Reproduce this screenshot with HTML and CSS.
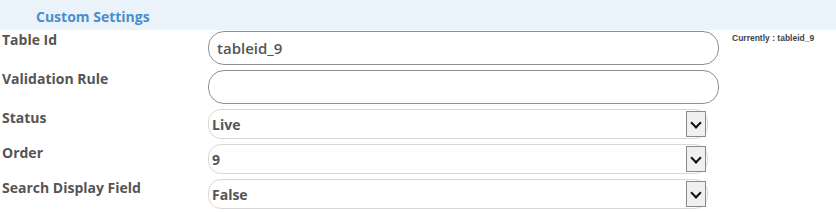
FILE: index.html
```html
<!DOCTYPE html>
<html lang="en">
  <head>
    <meta charset="UTF-8" />
    <title>Custom Settings</title>
    <link rel="stylesheet" href="styles.css">
  </head>
  <body>
    <div class="settings">
      <h3 class="head">Custom Settings</h3>

      <div class="row">
        <label class="lbl">Table Id</label>
        <div class="field">
          <input class="txt" type="text" value="tableid_9" />
        </div>
        <span class="note">Currently : tableid_9</span>
      </div>

      <div class="row">
        <label class="lbl">Validation Rule</label>
        <div class="field">
          <input class="txt" type="text" value="" />
        </div>
      </div>

      <div class="row">
        <label class="lbl">Status</label>
        <div class="field">
          <div class="sel"><span>Live</span><span class="arrow"></span></div>
        </div>
      </div>

      <div class="row">
        <label class="lbl">Order</label>
        <div class="field">
          <div class="sel"><span>9</span><span class="arrow"></span></div>
        </div>
      </div>

      <div class="row">
        <label class="lbl">Search Display Field</label>
        <div class="field">
          <div class="sel"><span>False</span><span class="arrow"></span></div>
        </div>
      </div>
    </div>
  </body>
</html>
```

FILE: styles.css
```css
* {
  margin: 0;
  padding: 0;
  box-sizing: border-box;
  font-family: "Open Sans", Arial, sans-serif;
}

body {
  background: #fff;
}

.head {
  height: 30px;
  background: #eaf2fa;
  color: #4b8dcb;
  font-size: 14px;
  font-weight: 700;
  line-height: 33px;
  padding-left: 36px;
}

.row {
  display: flex;
  align-items: flex-start;
  margin-top: 5px;
}

.row:first-of-type {
  margin-top: 1px;
}

.lbl {
  width: 208px;
  color: #555;
  font-size: 14px;
  font-weight: 700;
  padding-left: 2px;
  line-height: 17px;
}

.field {
  width: 511px;
}

.txt {
  width: 100%;
  height: 34px;
  border: 1px solid #8f8f8f;
  border-radius: 16px;
  padding: 0 8px;
  font-size: 15px;
  font-weight: 600;
  color: #555;
  outline: none;
}

.sel {
  width: 500px;
  height: 30px;
  border: 1px solid #d9d9d9;
  border-radius: 13px;
  display: flex;
  align-items: center;
  justify-content: space-between;
  padding: 0 1px 0 3px;
  font-size: 14px;
  font-weight: 700;
  color: #555;
}

.arrow {
  width: 20px;
  height: 26px;
  background: #f0f0f0;
  border: 1px solid #8a8a8a;
  position: relative;
}

.arrow::after {
  content: "";
  position: absolute;
  left: 5px;
  top: 7px;
  width: 6px;
  height: 6px;
  border-right: 2px solid #111;
  border-bottom: 2px solid #111;
  transform: rotate(45deg);
}

.note {
  margin: 2px 0 0 13px;
  font-family: "Liberation Sans", Arial, sans-serif;
  font-size: 8.5px;
  font-weight: 700;
  color: #444;
}
```
